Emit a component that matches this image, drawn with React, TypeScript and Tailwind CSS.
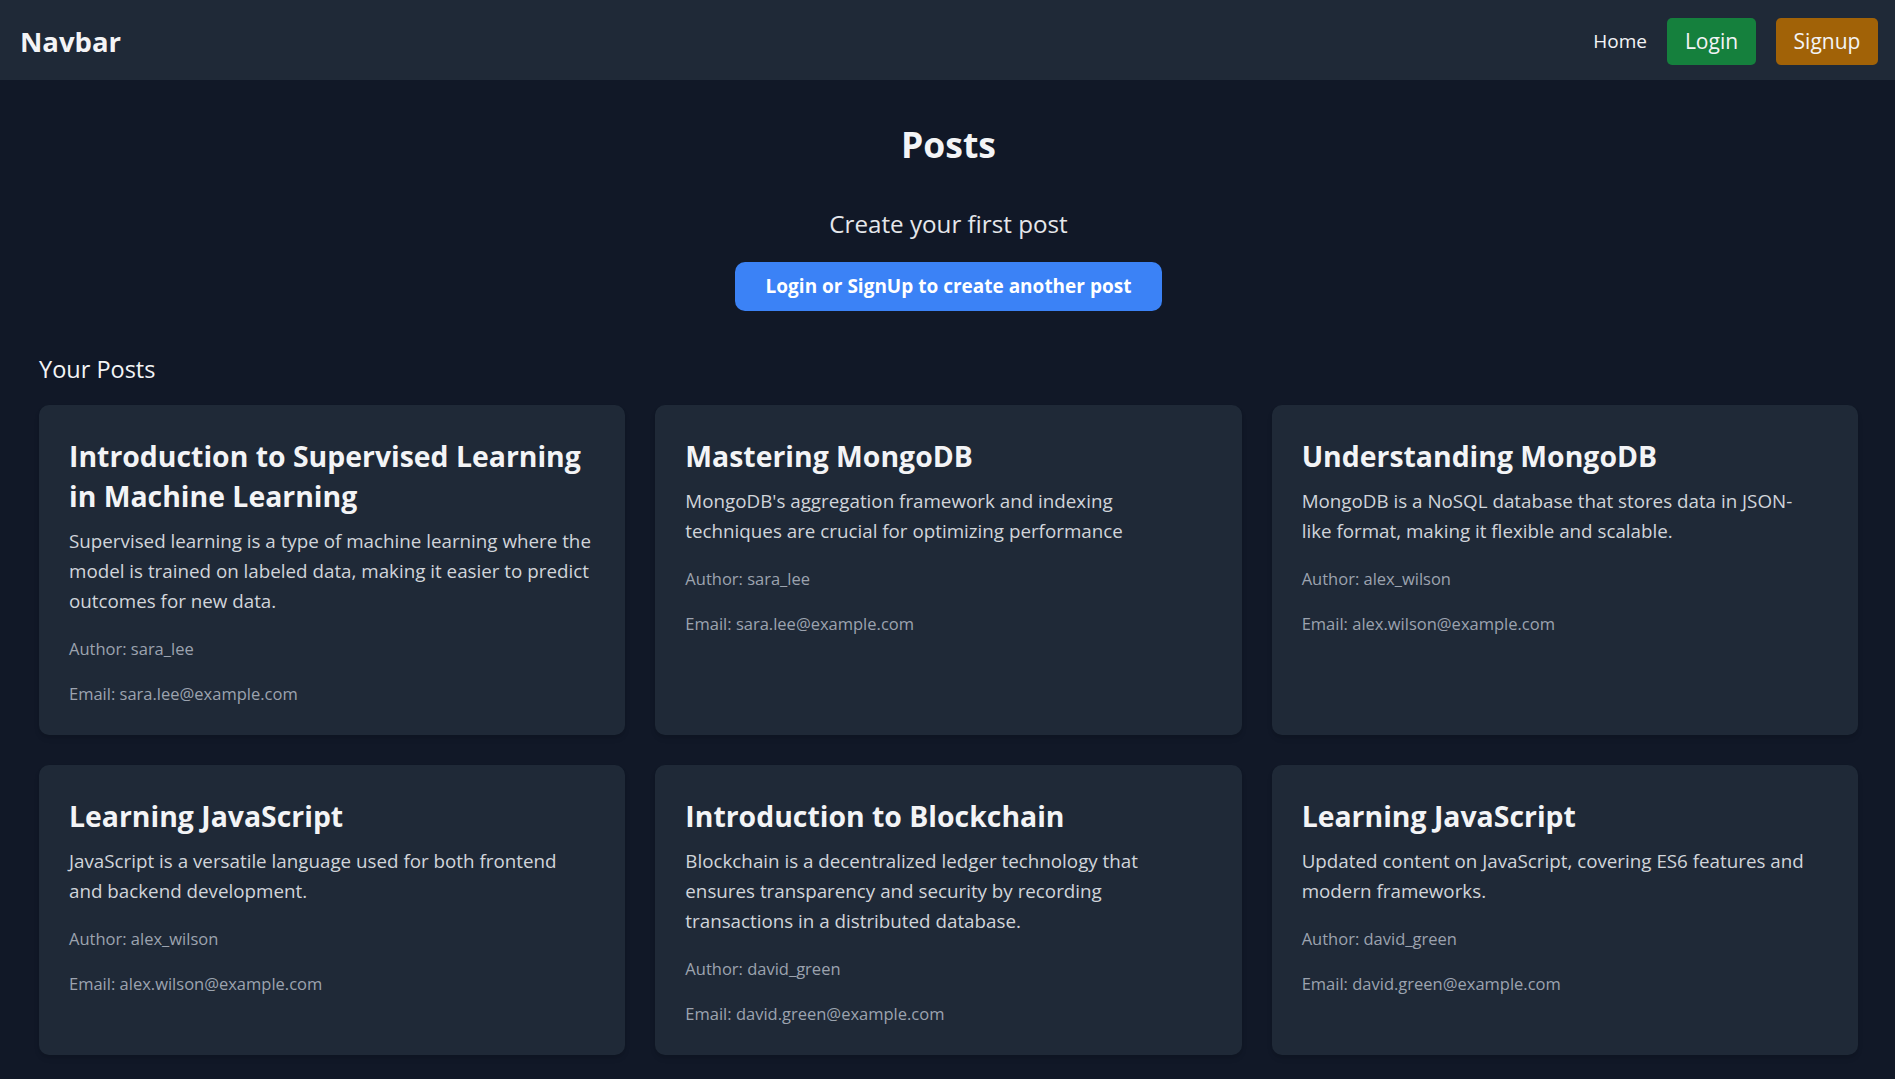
type post = {
  _id: string;
  title: string;
  content: string;
  author: string;
  email: string;
};

const posts: post[] = [
  {
    _id: "1",
    title: "Introduction to Supervised Learning in Machine Learning",
    content:
      "Supervised learning is a type of machine learning where the model is trained on labeled data, making it easier to predict outcomes for new data.",
    author: "sara_lee",
    email: "sara.lee@example.com",
  },
  {
    _id: "2",
    title: "Mastering MongoDB",
    content:
      "MongoDB's aggregation framework and indexing techniques are crucial for optimizing performance",
    author: "sara_lee",
    email: "sara.lee@example.com",
  },
  {
    _id: "3",
    title: "Understanding MongoDB",
    content:
      "MongoDB is a NoSQL database that stores data in JSON-\nlike format, making it flexible and scalable.",
    author: "alex_wilson",
    email: "alex.wilson@example.com",
  },
  {
    _id: "4",
    title: "Learning JavaScript",
    content:
      "JavaScript is a versatile language used for both frontend\nand backend development.",
    author: "alex_wilson",
    email: "alex.wilson@example.com",
  },
  {
    _id: "5",
    title: "Introduction to Blockchain",
    content:
      "Blockchain is a decentralized ledger technology that ensures transparency and security by recording transactions in a distributed database.",
    author: "david_green",
    email: "david.green@example.com",
  },
  {
    _id: "6",
    title: "Learning JavaScript",
    content:
      "Updated content on JavaScript, covering ES6 features and modern frameworks.",
    author: "david_green",
    email: "david.green@example.com",
  },
];

const Navbar = () => {
  return (
    <nav className="h-[80px] bg-[#1f2937] flex items-center justify-between pl-[20px] pr-[17px] pt-[3px]">
      <h1 className="text-[27.5px] font-bold text-[#f3f4f6]">Navbar</h1>
      <div className="flex items-center gap-[20px]">
        <a href="#" className="text-[19px] text-[#f3f4f6]">
          Home
        </a>
        <button className="h-[47px] w-[89px] flex items-center justify-center rounded-[5px] bg-[#15803d] text-[21px] text-[#f3f4f6]">
          Login
        </button>
        <button className="h-[47px] w-[102px] flex items-center justify-center rounded-[5px] bg-[#a16207] text-[21px] text-[#f3f4f6]">
          Signup
        </button>
      </div>
    </nav>
  );
};

const PostCard = ({ item }: { item: post }) => {
  return (
    <div className="bg-[#1f2937] rounded-[10px] px-[30px] pt-[31px] pb-[29px] shadow-md">
      <h2 className="text-[28.4px] leading-[40px] font-bold text-[#f3f4f6]">
        {item.title}
      </h2>
      <p className="mt-[10px] text-[18.8px] leading-[30px] text-[#d1d5db] whitespace-pre-line">
        {item.content}
      </p>
      <p className="mt-[20px] text-[16.5px] leading-[25px] text-[#9ca3af]">
        Author: {item.author}
      </p>
      <p className="mt-[20px] text-[16.5px] leading-[25px] text-[#9ca3af]">
        Email: {item.email}
      </p>
    </div>
  );
};

export default function App() {
  return (
    <div className="min-h-screen bg-[#111827] font-['Open_Sans',sans-serif]">
      <Navbar />
      <main className="pl-[39px] pr-[37px] pt-[42px] pb-[40px]">
        <div className="flex flex-col items-center">
          <h1 className="text-[35.5px] leading-[45px] font-bold text-[#f3f4f6]">Posts</h1>
          <h2 className="mt-[39px] text-[24.2px] leading-[35px] text-[#e5e7eb]">
            Create your first post
          </h2>
          <button className="mt-[21px] h-[49px] px-[31px] rounded-[10px] bg-[#3b82f6] text-[19px] font-bold text-white">
            Login or SignUp to create another post
          </button>
        </div>
        <h2 className="mt-[41px] text-[23.5px] leading-[35px] font-medium text-[#f3f4f6]">
          Your Posts
        </h2>
        <div className="mt-[18px] grid grid-cols-3 gap-[30px]">
          {posts.map((item) => (
            <PostCard key={item._id} item={item} />
          ))}
        </div>
      </main>
    </div>
  );
}
